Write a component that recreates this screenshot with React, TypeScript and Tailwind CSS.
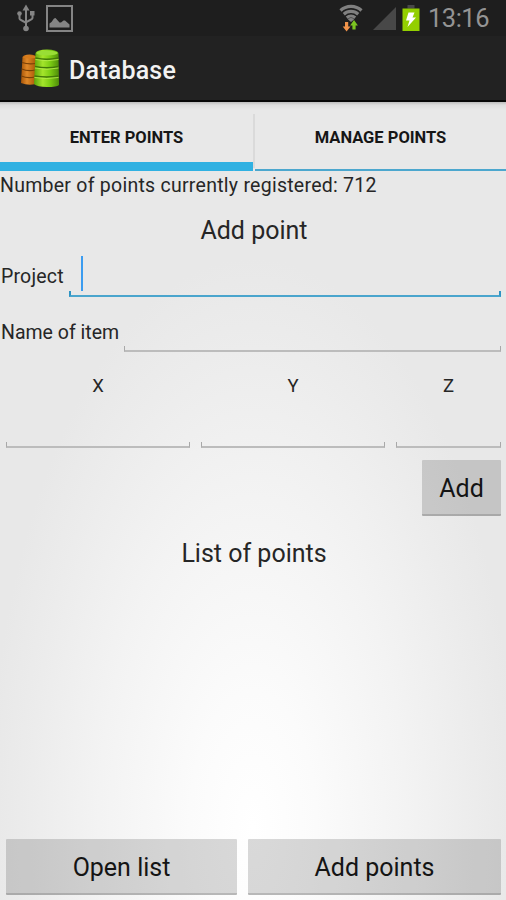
import React, { useState } from 'react';

interface FieldProps {
    label: string;
    active?: boolean;
    className?: string;
}

// Holo style text field: a bottom line with short ticks on both ends
const Field: React.FC<FieldProps> = ({ label, active, className = '' }) => (
    <div className={`flex flex-col justify-end ${className}`} role="textbox" aria-label={label}>
        {active && <div className="w-[2px] h-[35px] ml-[12px] bg-[#3b9cf0]" />}
        <div className={active
            ? 'h-[6px] border-b-2 border-x-2 border-[#4aa5cd] border-x-[#2e94c4]'
            : 'h-[6px] border-b-2 border-x border-[#bcbcbc] border-x-[#a8a8a8]'}
        />
    </div>
);

const HoloButton: React.FC<{ label: string; className?: string }> = ({ label, className = '' }) => (
    <button className={`h-[56px] pt-[4px] rounded-[1px] bg-black/15 border-b-2 border-black/15 text-[25px] tracking-normal text-[#141414] ${className}`}>
        {label}
    </button>
);

const StatusBar: React.FC = () => (
    <div className="h-[36px] shrink-0 bg-[#1e1e1e] flex items-center justify-between pl-[17px] pr-[15px]">
        <div className="flex items-center gap-[11px]">
            {/* USB */}
            <svg width="18" height="28" viewBox="0 0 18 28" fill="none" stroke="#858585" strokeWidth="2">
                <path d="M9 4v20M2.500 11v3.500c0 2 6.500 3 6.500 5M15.500 10v4c0 2-6.500 3-6.500 5" />
                <path d="M9 0.500l3.500 6h-7z" fill="#858585" stroke="none" />
                <circle cx="2.500" cy="9.500" r="2.300" fill="#858585" stroke="none" />
                <path d="M13 7h4.500v4.500H13z" fill="#858585" stroke="none" />
                <circle cx="9" cy="24.500" r="2.800" fill="#858585" stroke="none" />
            </svg>
            {/* Picture */}
            <svg width="27" height="27" viewBox="0 0 27 27">
                <rect x="1" y="1" width="25" height="25" fill="none" stroke="#858585" strokeWidth="2" />
                <path d="M3.500 22.500v-4l2-1.500 2.500-3.500 1.500-.5 4 4.500h1.500l2.500-2 1.500 0 4.500 4v3z" fill="#858585" />
            </svg>
        </div>
        <div className="flex items-center">
            {/* Wifi with traffic arrows */}
            <svg width="24" height="28" viewBox="0 0 24 28">
                <g fill="none" stroke="#808080" strokeWidth="3.200">
                    <path d="M1.500 6.500a15.500 15.500 0 0 1 21 0" />
                    <path d="M4.800 10.200a10.800 10.800 0 0 1 14.400 0" />
                    <path d="M7.800 13.700a6.500 6.500 0 0 1 8.400 0" />
                </g>
                <path d="M12 18l-3.200-2.700a5 5 0 0 1 6.400 0z" fill="#808080" />
                <path d="M6 18h3.200v4.500h2.300L7.600 27.500 3.700 22.500H6z" fill="#f0934a" />
                <path d="M13.400 25.500v-4h-2.300L15 16l3.900 5.500h-2.300v4z" fill="#7bc520" />
            </svg>
            {/* Signal */}
            <svg className="ml-[9px]" width="24" height="24" viewBox="0 0 24 24">
                <path d="M24 1v23H1z" fill="#484848" />
            </svg>
            {/* Battery */}
            <svg className="ml-[6px]" width="18" height="28" viewBox="0 0 18 28">
                <rect x="5.500" y="1" width="7" height="3.500" fill="#484848" />
                <rect x="0.500" y="4.500" width="17" height="22.500" fill="#93cf00" />
                <path d="M6.500 8.500h6l-2 5h3.500L5.500 23l2-6.500H4z" fill="#fff" />
            </svg>
            <span className="ml-[8px] w-[63px] text-[25.5px] leading-[36px] tracking-[-0.5px] text-[#949494] whitespace-nowrap">13:16</span>
        </div>
    </div>
);

const DatabaseIcon: React.FC = () => (
    <svg className="mt-[2px]" width="40" height="40" viewBox="0 0 40 40">
        <defs>
            <linearGradient id="orange">
                <stop offset="0" stopColor="#a65408" />
                <stop offset="0.400" stopColor="#e08828" />
                <stop offset="1" stopColor="#a85606" />
            </linearGradient>
            <linearGradient id="green">
                <stop offset="0" stopColor="#5ba20a" />
                <stop offset="0.350" stopColor="#a4e52b" />
                <stop offset="0.650" stopColor="#7bcb13" />
                <stop offset="1" stopColor="#4f8c0a" />
            </linearGradient>
        </defs>
        <path d="M2.500 8q1-2.500 7-2.500T16 8v27q-8 2-15-1z" fill="url(#orange)" />
        <path d="M2.500 8.500q5-3.500 13-1.500v2q-8 1-13-.5z" fill="#d67b1c" />
        <path d="M2 13.500q6 2 13.500 1M1.700 20q6 2.500 13.500 1M1.300 27q6 2.500 13.500 1" fill="none" stroke="#7a4006" strokeWidth="1.200" />
        <path d="M15.500 4Q17 .5 27 .5T38.500 4l.5 32q-2 2-12 2t-13-3z" fill="url(#green)" />
        <ellipse cx="27" cy="4" rx="10.800" ry="2.600" fill="#99de35" />
        <path d="M15.500 9q11 2.500 23 0M15 17.500q12 2.500 23.500 0M14.500 27q12 2 24 0" fill="none" stroke="#427808" strokeWidth="1.500" />
        <path d="M15.500 10.500q12 2.500 23 0M15 19q12 2.500 23.500 0M14.500 28.500q12 2 24 0" fill="none" stroke="#b9ef4e" strokeWidth="0.800" />
    </svg>
);

const App: React.FC = () => {
    const [tab, setTab] = useState('enter');

    return (
        <div className="w-full h-screen flex flex-col overflow-hidden font-['Roboto',sans-serif] text-[#262626] bg-[radial-gradient(ellipse_265px_570px_at_50%_92%,#ffffff_0%,#fbfbfb_24%,#f3f3f3_58%,#ececec_84%,#e8e8e8_100%)]">
            <StatusBar />

            {/* Action bar */}
            <header className="h-[66px] shrink-0 bg-[#222222] border-b-2 border-[#080808] flex items-center pl-[20px] gap-[9px]">
                <DatabaseIcon />
                <h1 className="pt-[5px] text-[25px] tracking-[0.2px] font-medium text-[#f2f2f2]">Database</h1>
            </header>

            {/* Tabs */}
            <nav className="h-[69px] shrink-0 flex bg-[linear-gradient(#bcbcbc,#dedede_3px,#e8e8e8_8px)] text-[16.5px] font-bold text-[#161616]">
                <button
                    onClick={() => setTab('enter')}
                    className={`w-[253px] ${tab === 'enter' ? 'border-b-[9px] pt-[12px]' : 'border-b-2 pt-[5px]'} border-[#30b1e2]`}
                >
                    ENTER POINTS
                </button>
                <div className="w-[2px] mt-[12px] mb-[3px] bg-[#dadada]" />
                <button
                    onClick={() => setTab('manage')}
                    className={`flex-1 ${tab === 'manage' ? 'border-b-[9px] pt-[12px]' : 'border-b-2 pt-[5px]'} border-[#4ca7ce]`}
                >
                    MANAGE POINTS
                </button>
            </nav>

            <main className="flex-1 flex flex-col text-[19.5px]">
                <p className="h-[33px] leading-[30px] tracking-[0.26px] whitespace-nowrap">Number of points currently registered: 712</p>
                <h2 className="h-[52px] pl-[2px] leading-[54px] text-center text-[25px]">Add point</h2>

                <div className="h-[41px] flex items-center pr-[5px]">
                    <span className="w-[69px] pl-px pt-px tracking-[0.2px]">Project</span>
                    <Field label="Project" active className="flex-1 h-full" />
                </div>
                <div className="h-[40px] mt-[15px] flex items-center pr-[5px]">
                    <span className="w-[124px] pl-px pt-px whitespace-nowrap">Name of item</span>
                    <Field label="Name of item" className="flex-1 h-full" />
                </div>

                {/* Coordinates */}
                <div className="h-[96px] flex gap-[11px] pl-[6px] pr-[5px]">
                    <div className="w-[184px] flex flex-col">
                        <span className="h-[66px] leading-[68px] text-center text-[18.5px]">X</span>
                        <Field label="X" className="flex-1" />
                    </div>
                    <div className="w-[184px] flex flex-col">
                        <span className="h-[66px] leading-[68px] text-center text-[18.5px]">Y</span>
                        <Field label="Y" className="flex-1" />
                    </div>
                    <div className="flex-1 flex flex-col">
                        <span className="h-[66px] leading-[68px] text-center text-[18.5px]">Z</span>
                        <Field label="Z" className="flex-1" />
                    </div>
                </div>

                <div className="flex justify-end mt-[12px] pr-[5px]">
                    <HoloButton label="Add" className="w-[79px]" />
                </div>
                <h2 className="h-[74px] pl-[2px] leading-[76px] text-center text-[25px]">List of points</h2>

                <div className="mt-auto mb-[5px] flex gap-[11px] pl-[6px] pr-[5px]">
                    <HoloButton label="Open list" className="w-[231px]" />
                    <HoloButton label="Add points" className="flex-1" />
                </div>
            </main>
        </div>
    );
};

export default App;
